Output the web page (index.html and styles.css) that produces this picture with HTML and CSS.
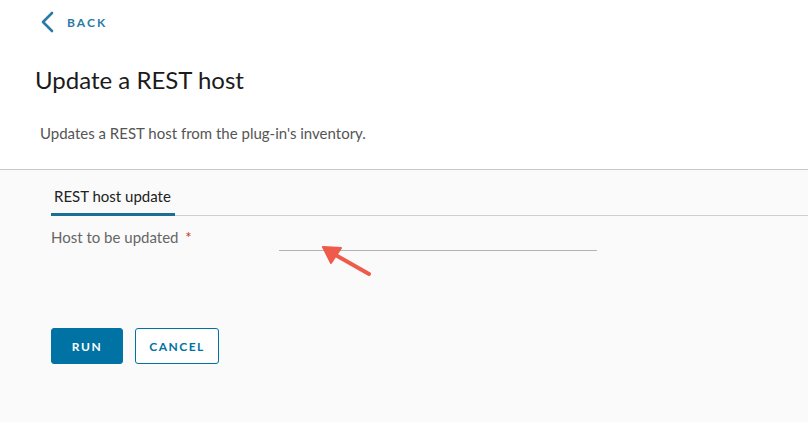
FILE: index.html
```html
<!DOCTYPE html>
<html lang="en">
<head>
    <meta charset="UTF-8">
    <meta name="viewport" content="width=device-width, initial-scale=1.0">
    <title>Update a REST host</title>
    <link rel="stylesheet" href="styles.css">
</head>
<body>
    <div class="page-header">
        <a class="back-link" href="#">
            <svg class="back-icon" width="14" height="22" viewBox="0 0 14 22">
                <path d="M12 2 L3 11 L12 20" fill="none" stroke="#2b7aa6" stroke-width="2.6" stroke-linecap="round" stroke-linejoin="round"/>
            </svg>
            <span>BACK</span>
        </a>
        <h1 class="title">Update a REST host</h1>
        <p class="description">Updates a REST host from the plug-in's inventory.</p>
    </div>

    <div class="workflow">
        <div class="tabs">
            <div class="tab active">REST host update</div>
        </div>

        <div class="form-row">
            <label class="field-label">Host to be updated <span class="required">*</span></label>
            <div class="field-input"></div>
            <!-- annotation arrow pointing at the empty field -->
            <svg class="callout" width="70" height="50" viewBox="0 0 70 50">
                <path d="M55 42 L18 21" stroke="#ef5a4a" stroke-width="4" stroke-linecap="round"/>
                <path d="M9 15 L27 16 L17 31 Z" fill="#ef5a4a" stroke="#ef5a4a" stroke-width="2" stroke-linejoin="round"/>
            </svg>
        </div>

        <div class="actions">
            <button class="btn btn-primary">RUN</button>
            <button class="btn btn-outline">CANCEL</button>
        </div>
    </div>
</body>
</html>
```

FILE: styles.css
```css
body {
    margin: 0;
    background: #fafafa;
    font-family: Lato, "Noto Sans", sans-serif;
    color: #333;
}

.page-header {
    background: #fff;
    border-bottom: 1px solid #c8c8c8;
    height: 170px;
    box-sizing: border-box;
    padding: 11px 0 0 0;
}

.back-link {
    display: flex;
    align-items: center;
    gap: 13px;
    margin-left: 40px;
    color: #2b7aa6;
    text-decoration: none;
    font-size: 12px;
    font-weight: bold;
    letter-spacing: 2.1px;
    height: 22px;
}

.title {
    margin: 31px 0 0 35px;
    font-size: 24px;
    font-weight: normal;
    color: #1b1b1b;
    line-height: 32px;
}

.description {
    margin: 27px 0 0 40px;
    font-size: 15px;
    color: #555;
    line-height: 20px;
}

.workflow {
    padding-left: 51px;
}

.tabs {
    display: flex;
    border-bottom: 1px solid #cfcfcf;
    height: 46px;
    box-sizing: border-box;
}

.tab {
    display: flex;
    align-items: flex-end;
    padding: 0 4px 8px 3px;
    font-size: 15px;
    color: #222;
}

.tab.active {
    border-bottom: 3px solid #1c6e96;
    margin-bottom: -1px;
}

.form-row {
    position: relative;
    display: flex;
    align-items: flex-start;
    height: 112px;
}

.field-label {
    width: 228px;
    padding-top: 12px;
    font-size: 15px;
    color: #666;
}

.required {
    color: #c4361f;
    margin-left: 3px;
}

.field-input {
    width: 318px;
    margin-top: 34px;
    border-bottom: 1px solid #b3b3b3;
}

.callout {
    position: absolute;
    left: 263px;
    top: 16px;
}

.actions {
    display: flex;
    gap: 12px;
}

.btn {
    height: 36px;
    padding: 0;
    border-radius: 3px;
    font-family: Lato, "Noto Sans", sans-serif;
    font-size: 12px;
    font-weight: bold;
    letter-spacing: 1.5px;
    text-align: center;
    cursor: pointer;
}

.btn-primary {
    width: 72px;
    background: #0072a3;
    border: 1px solid #0072a3;
    color: #fff;
}

.btn-outline {
    width: 84px;
    background: #fff;
    border: 1px solid #0072a3;
    color: #0072a3;
}
```
